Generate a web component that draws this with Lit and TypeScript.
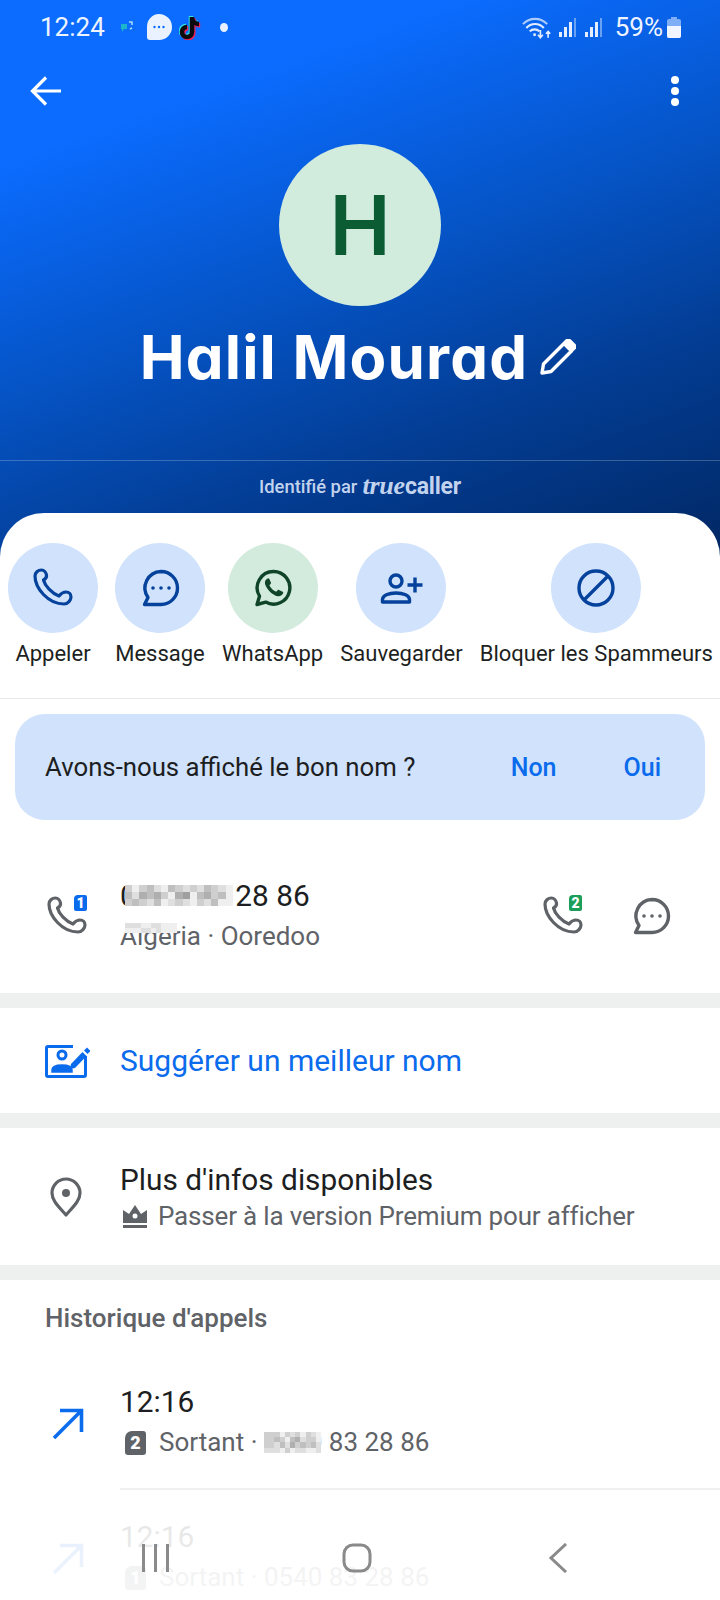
import { LitElement, css, html } from "lit";
import { customElement } from "lit/decorators.js";

const PHONE =
  "M8.5 2c2.500 0 4.500 2.500 5 5 .4 2.500-1 4-3 5 1.500 6 8 13 15.500 16 2-2.500 4-4 7-4 3 0 5 2 5 5 0 3-3 7-7 7C15 36 2 20 2 8c0-3.500 3-6 6.500-6z";

const phoneIcon = (color: string) => html`<svg
  width="40"
  height="40"
  viewBox="0 0 40 40"
  fill="none"
  stroke=${color}
  stroke-width="3.200"
  stroke-linejoin="round"
>
  <path d=${PHONE} />
</svg>`;

const bubbleIcon = (color: string) => html`<svg width="40" height="40" viewBox="0 0 40 40">
  <path
    d="M21 3.500a16.500 16.500 0 1 1 0 33H4.500l3.500-7A16.500 16.500 0 0 1 21 3.500z"
    fill="none"
    stroke=${color}
    stroke-width="3.400"
    stroke-linejoin="round"
  />
  <circle cx="13" cy="20" r="1.800" fill=${color} />
  <circle cx="21" cy="20" r="1.800" fill=${color} />
  <circle cx="29" cy="20" r="1.800" fill=${color} />
</svg>`;

const whatsappIcon = html`<svg width="40" height="40" viewBox="0 0 40 40">
  <path
    d="M20.500 3.500a16.300 16.300 0 1 1-7.800 30.600L4 36.500l2.500-8.300A16.300 16.300 0 0 1 20.500 3.500z"
    fill="none"
    stroke="#0f4429"
    stroke-width="3.400"
    stroke-linejoin="round"
  />
  <path
    d="M14.800 10.500c-1.700.6-3.300 2.600-2.800 5.200.9 4.700 7.400 11.600 12.800 12.500 2.500.4 4.700-1 5.400-3.100.2-.6 0-1.100-.5-1.400l-3.700-1.800c-.6-.3-1-.2-1.400.3l-1.300 1.600c-2.900-1-5.700-3.700-6.900-6.500l1.200-1.300c.4-.5.500-.9.300-1.400l-1.700-3.900c-.3-.6-1-.7-1.400-.4z"
    fill="#0f4429"
  />
</svg>`;

const addPersonIcon = html`<svg width="44" height="40" viewBox="0 0 44 40" fill="none" stroke="#04429c" stroke-width="3.400">
  <circle cx="17" cy="13" r="6" />
  <path d="M3.500 34v-2.500c0-4 6-6.500 13.500-6.500s13.500 2.500 13.500 6.500V34z" stroke-linejoin="round" />
  <path d="M36 9.500v15M28.500 17h15" />
</svg>`;

const blockIcon = html`<svg width="40" height="40" viewBox="0 0 40 40" fill="none" stroke="#04429c" stroke-width="3.400">
  <circle cx="20" cy="20" r="17" />
  <path d="M8 32L32 8" />
</svg>`;

const arrowIcon = html`<svg class="out" width="32" height="32" viewBox="0 0 32 32" fill="none" stroke="#0b6bed" stroke-width="3.600">
  <path d="M2 31L29 4M8 3.500h21.500V25" />
</svg>`;

const barsIcon = html`<svg width="19" height="19" viewBox="0 0 19 19" fill="#e3edff">
  <rect x="0" y="14" width="3" height="5" />
  <rect x="5" y="9" width="3" height="10" />
  <rect x="10" y="4" width="3" height="15" />
  <rect x="15" y="0" width="2" height="19" opacity=".45" />
</svg>`;

const TIKTOK = "M13 3v15a5 5 0 1 1-5-5M13 4c.5 3.500 3.500 6 7 6";

// pixelated patches that hide part of the number
const MOSAIC_A = ["cecbdebcdcdbcde", "bdabacea9ebacbe", "cbcdbedcdecdbee"];
const MOSAIC_B = ["cccecdcecde", "ccbcebadcce", "ccdbdacbcbd", "dddeceddeed"];
const MOSAIC_C = ["dddeeddeee", "eeeddedeee"];

const mosaic = (rows: string[], size: number, cls: string) => html`<span class="mosaic ${cls}">
  ${rows.map(
    (row) => html`<span class="mrow">
      ${row.split("").map((c) => {
        const v = parseInt(c, 16) * 16 + 15;
        return html`<i style="width:${size}px;height:${size}px;background:rgb(${v},${v},${v})"></i>`;
      })}
    </span>`
  )}
</span>`;

const actions = [
  { label: "Appeler", green: false, icon: phoneIcon("#04429c") },
  { label: "Message", green: false, icon: bubbleIcon("#04429c") },
  { label: "WhatsApp", green: true, icon: whatsappIcon },
  { label: "Sauvegarder", green: false, icon: addPersonIcon },
  { label: "Bloquer les Spammeurs", green: false, icon: blockIcon },
];

@customElement("app-root")
export class AppRoot extends LitElement {
  static styles = css`
    :host {
      display: block;
      position: relative;
      width: 720px;
      height: 1600px;
      overflow: hidden;
      background: #fff;
      font-family: Roboto, "Liberation Sans", sans-serif;
      color: #1c1e21;
    }

    .hero {
      height: 560px;
      margin-bottom: -47px;
      background: linear-gradient(160deg, #0b6cff 0%, #0b6cff 20%, #0552c2 50%, #033d94 72%, #012763 100%);
      color: #fff;
      display: flex;
      flex-direction: column;
    }

    .status {
      height: 54px;
      padding: 0 39px 0 40px;
      display: flex;
      align-items: center;
      font-size: 26px;
      color: #eef4ff;
    }

    .status .time {
      width: 80px;
    }

    .notif {
      display: flex;
      align-items: center;
    }

    .notif .bubble {
      margin: 0 7px 0 13px;
    }

    .notif .dot {
      width: 8px;
      height: 9px;
      margin-left: 17px;
      border-radius: 50%;
      background: #eaf2ff;
    }

    .status .right {
      margin-left: auto;
      display: flex;
      align-items: center;
      gap: 7px;
    }

    .pct {
      margin: 0 -3px 0 4px;
    }

    .toolbar {
      height: 74px;
      padding: 0 0 0 30px;
      display: flex;
      align-items: center;
      justify-content: space-between;
      margin-bottom: 16px;
    }

    .dots {
      display: flex;
      flex-direction: column;
      gap: 3px;
      margin-right: 41px;
    }

    .dots i {
      width: 8px;
      height: 8px;
      border-radius: 50%;
      background: #fff;
    }

    .avatar {
      align-self: center;
      width: 162px;
      height: 162px;
      flex: none;
      border-radius: 50%;
      background: #d1ebdd;
      color: #0b5b33;
      display: flex;
      align-items: center;
      justify-content: center;
      font-family: Inter, "Liberation Sans", sans-serif;
      font-weight: 600;
      font-size: 82px;
    }

    .name-row {
      display: flex;
      justify-content: center;
      align-items: center;
      gap: 12px;
      margin-top: 16px;
      padding-right: 4px;
      height: 70px;
      flex: none;
    }

    .name {
      font-family: Inter, "Liberation Sans", sans-serif;
      font-feature-settings: "cv11";
      font-weight: 700;
      font-size: 60px;
      letter-spacing: 1.2px;
      line-height: 70px;
      white-space: nowrap;
    }

    .hero hr {
      width: 100%;
      height: 1px;
      margin: 68px 0 0;
      border: 0;
      background: rgba(255, 255, 255, 0.22);
      flex: none;
    }

    .identified {
      margin-top: 12px;
      height: 26px;
      display: flex;
      justify-content: center;
      align-items: center;
      gap: 5px;
      font-size: 18.400px;
      font-weight: 500;
      color: #c2d3ee;
    }

    .brand {
      font-weight: 700;
      font-size: 23px;
      letter-spacing: -0.2px;
    }

    .brand em {
      font-family: "Liberation Serif", serif;
      font-style: italic;
      font-weight: 700;
      font-size: 26px;
    }

    .sheet {
      position: relative;
      background: #fff;
      border-radius: 44px 44px 0 0;
    }

    .actions {
      display: flex;
      gap: 17px;
      padding: 30px 0 0 8px;
      height: 155px;
      border-bottom: 1px solid #e6e8ea;
    }

    .action {
      display: flex;
      flex-direction: column;
      align-items: center;
      white-space: nowrap;
      font-size: 22px;
      line-height: 30px;
      color: #1d1f22;
    }

    .circle {
      width: 90px;
      height: 90px;
      margin-bottom: 6px;
      border-radius: 50%;
      background: #d0e2fc;
      display: flex;
      align-items: center;
      justify-content: center;
    }

    .circle.green {
      background: #d3ebdd;
    }

    .ask {
      margin: 15px 15px 0;
      height: 106px;
      padding: 0 44px 0 30px;
      border-radius: 30px;
      background: #d0e2fc;
      display: flex;
      align-items: center;
      font-size: 25.750px;
    }

    .ask span:first-child {
      flex: 1;
    }

    .ask b {
      font-weight: 500;
      font-size: 25px;
      color: #0b6bed;
    }

    .ask b + b {
      margin-left: 67px;
    }

    .row {
      display: flex;
      align-items: center;
      padding-left: 45px;
    }

    .phone-row {
      height: 173px;
      box-sizing: border-box;
      padding-top: 18px;
      padding-right: 49px;
    }

    .ic {
      width: 75px;
      flex: none;
      position: relative;
      display: flex;
    }

    .phone-row > .ic svg {
      margin-left: 2px;
    }

    .sim {
      position: absolute;
      left: 29px;
      top: -1px;
      width: 13px;
      height: 16px;
      border-radius: 4px 2px 2px 2px;
      color: #fff;
      font-size: 14px;
      line-height: 16px;
      font-weight: 900;
      text-align: center;
    }

    .main {
      font-size: 29.800px;
      line-height: 40px;
      position: relative;
    }

    .sub {
      font-size: 26px;
      line-height: 40px;
      color: #5f6368;
      position: relative;
      display: flex;
      align-items: center;
    }

    .grow {
      flex: 1;
    }

    .tail {
      display: flex;
      align-items: center;
      gap: 48px;
    }

    .tail .ic {
      width: 40px;
    }

    .tail .sim {
      left: 26px;
    }

    .band {
      height: 15px;
      background: #eef0f0;
    }

    .suggest {
      height: 105px;
      color: #0b6bed;
      font-size: 30px;
    }

    .info {
      height: 137px;
      box-sizing: border-box;
      padding-top: 3px;
    }

    .info .ic {
      margin-top: -3px;
    }

    .info .main,
    .info .sub {
      line-height: 36px;
    }

    .info .sub {
      letter-spacing: -0.18px;
    }

    .crown {
      margin: 0 11px 0 3px;
    }

    .history-title {
      padding: 24px 0 23px 45px;
      font-size: 26px;
      line-height: 28px;
      font-weight: 500;
      color: #5f6368;
    }

    .call {
      height: 135px;
    }

    .call .body {
      flex: 1;
      height: 100%;
      padding-top: 2px;
      display: flex;
      flex-direction: column;
      justify-content: center;
      border-bottom: 2px solid #eff0f1;
      box-sizing: border-box;
    }

    .call .sub {
      line-height: 41px;
    }

    .out {
      margin-left: 7px;
    }

    .sim-chip {
      width: 21px;
      height: 24px;
      margin: 0 13px 0 5px;
      border-radius: 7px 3px 3px 3px;
      background: #5f6368;
      color: #fff;
      font-size: 18px;
      font-weight: 900;
      line-height: 24px;
      text-align: center;
      flex: none;
    }

    .mosaic {
      position: absolute;
      display: flex;
      flex-direction: column;
    }

    .mrow {
      display: flex;
    }

    .mrow i {
      display: block;
    }

    .m-a {
      left: 5px;
      top: 9px;
    }

    .m-b {
      left: 144px;
      top: 10px;
    }

    .m-c {
      left: 5px;
      top: 7px;
    }

    .nav {
      position: absolute;
      left: 0;
      right: 0;
      bottom: 0;
      height: 96px;
      background: linear-gradient(rgba(255, 255, 255, 0.88), rgba(255, 255, 255, 0.94));
    }

    .nav svg {
      position: absolute;
      top: 39px;
    }

    .nav .recents {
      left: 140px;
    }

    .nav .home {
      left: 342px;
    }

    .nav .back {
      left: 548px;
    }
  `;

  render() {
    return html`
      <div class="hero">
        <div class="status">
          <span class="time">12:24</span>
          <span class="notif">
            <svg width="13" height="12" viewBox="0 0 13 12">
              <path d="M1 3h6v5H4l-2 3V8H1z" fill="#1cb5c9" />
              <path d="M9 1h3v3M10 8l2-1" fill="none" stroke="#a9dcf5" stroke-width="1.500" />
            </svg>
            <svg class="bubble" width="26" height="26" viewBox="0 0 26 26">
              <path d="M13 0a13 13 0 0 1 0 26H4C2 26 1 25 1 23v-10A12.500 12.500 0 0 1 13 0z" fill="#eaf2ff" />
              <circle cx="8.500" cy="13" r="1.200" fill="#0b6cff" />
              <circle cx="13" cy="13" r="1.200" fill="#0b6cff" />
              <circle cx="17.500" cy="13" r="1.200" fill="#0b6cff" />
            </svg>
            <svg width="24" height="26" viewBox="0 0 24 26" fill="none" stroke-width="4.600">
              <path d=${TIKTOK} stroke="#35e0e8" transform="translate(-1 -1)" />
              <path d=${TIKTOK} stroke="#f0215a" transform="translate(1.200 1.200)" />
              <path d=${TIKTOK} stroke="#0c0c10" />
            </svg>
            <span class="dot"></span>
          </span>
          <span class="right">
            <svg width="30" height="23" viewBox="0 0 31 23" fill="none" stroke="#e3edff" stroke-width="2.200">
              <path d="M1 8a17 17 0 0 1 25 0" opacity=".75" />
              <path d="M4.500 12a12 12 0 0 1 18 0M8 15.500a7 7 0 0 1 10 0" />
              <circle cx="13" cy="19" r="1.500" fill="#e3edff" stroke="none" />
              <path d="M19 14v8M16.500 19l2.500 3 2.500-3M27 22v-6M24.800 18l2.200-2.500 2.200 2.500" stroke-width="1.700" />
            </svg>
            ${barsIcon}${barsIcon}
            <span class="pct">59%</span>
            <svg width="14" height="21" viewBox="0 0 14 21">
              <path d="M4 0h6v2h2a2 2 0 0 1 2 2v15a2 2 0 0 1-2 2H2a2 2 0 0 1-2-2V4a2 2 0 0 1 2-2h2z" fill="#7fadf6" />
              <path d="M0 9h14v10a2 2 0 0 1-2 2H2a2 2 0 0 1-2-2z" fill="#f0f5ff" />
            </svg>
          </span>
        </div>
        <div class="toolbar">
          <svg width="32" height="32" viewBox="0 0 32 32" fill="none" stroke="#fff" stroke-width="3.200">
            <path d="M31 16H3M16 2.500L2.500 16 16 29.500" />
          </svg>
          <span class="dots"><i></i><i></i><i></i></span>
        </div>
        <div class="avatar">H</div>
        <div class="name-row">
          <span class="name">Halil Mourad</span>
          <svg width="36" height="36" viewBox="0 0 36 36" fill="none" stroke="#fff" stroke-width="3.400" stroke-linejoin="round">
            <path d="M2 34l1.500-9L24 4.500l7.500 7.500L11 32.500z" />
            <path d="M25 3.500l2-2c.7-.7 1.700-.7 2.400 0l5 5c.7.700.7 1.700 0 2.400l-2 2z" fill="#fff" />
          </svg>
        </div>
        <hr />
        <div class="identified">
          <span>Identifié par</span>
          <span class="brand"><em>true</em>caller</span>
        </div>
      </div>

      <div class="sheet">
        <div class="actions">
          ${actions.map(
            (a) => html`<div class="action">
              <span class="circle ${a.green ? "green" : ""}">${a.icon}</span>
              ${a.label}
            </div>`
          )}
        </div>

        <div class="ask">
          <span>Avons-nous affiché le bon nom ?</span>
          <b>Non</b>
          <b>Oui</b>
        </div>

        <div class="row phone-row">
          <div class="ic">${phoneIcon("#5f6368")}<span class="sim" style="background:#0b6bed">1</span></div>
          <div class="grow">
            <div class="main">0540 83 28 86${mosaic(MOSAIC_A, 7.200, "m-a")}</div>
            <div class="sub">Algeria · Ooredoo${mosaic(MOSAIC_C, 5.200, "m-c")}</div>
          </div>
          <div class="tail">
            <div class="ic">${phoneIcon("#5f6368")}<span class="sim" style="background:#1a9e59">2</span></div>
            ${bubbleIcon("#5f6368")}
          </div>
        </div>

        <div class="band"></div>

        <div class="row suggest">
          <div class="ic">
            <svg width="45" height="36" viewBox="0 0 45 36" fill="none" stroke="#0b6bed">
              <path d="M28 3.500H3A1.500 1.500 0 0 0 1.500 5v27A1.500 1.500 0 0 0 3 33.500h36a1.500 1.500 0 0 0 1.500-1.500V13" stroke-width="3" />
              <circle cx="17" cy="12" r="4" stroke-width="3" />
              <path d="M7 29v-2c0-3 4-5 10-5s10 2 10 5v2z" fill="#0b6bed" stroke-width="1.500" />
              <path d="M26 21l-1 5 5-1L41.500 13l-4-4z" fill="#0b6bed" stroke="none" />
              <path d="M39 7.500l3-3 3.500 3.500-3 3z" fill="#0b6bed" stroke="none" />
            </svg>
          </div>
          <span>Suggérer un meilleur nom</span>
        </div>

        <div class="band"></div>

        <div class="row info">
          <div class="ic">
            <svg width="42" height="42" viewBox="0 0 42 42" fill="none" stroke="#5f6368" stroke-width="3.200">
              <path d="M21 39C14 31 7 25 7 17a14 14 0 0 1 28 0c0 8-7 14-14 22z" stroke-linejoin="round" />
              <circle cx="21" cy="17" r="4" fill="#5f6368" stroke="none" />
            </svg>
          </div>
          <div class="grow">
            <div class="main">Plus d'infos disponibles</div>
            <div class="sub">
              <svg class="crown" width="24" height="24" viewBox="0 0 24 24" fill="#5f6368">
                <path d="M0 6l6 4 6-9 6 9 6-4v13H0z" />
                <path d="M0 21h24v3H0z" />
                <circle cx="12" cy="12" r="2.500" fill="#fff" />
              </svg>
              Passer à la version Premium pour afficher
            </div>
          </div>
        </div>

        <div class="band"></div>

        <div class="history-title">Historique d'appels</div>

        <div class="row call">
          <div class="ic">${arrowIcon}</div>
          <div class="body">
            <div class="main">12:16</div>
            <div class="sub">
              <span class="sim-chip">2</span>
              Sortant · 0540 83 28 86${mosaic(MOSAIC_B, 5.200, "m-b")}
            </div>
          </div>
        </div>

        <div class="row call">
          <div class="ic">${arrowIcon}</div>
          <div class="body">
            <div class="main">12:16</div>
            <div class="sub">
              <span class="sim-chip">1</span>
              Sortant · 0540 83 28 86
            </div>
          </div>
        </div>
      </div>

      <div class="nav">
        <svg class="recents" width="32" height="30" viewBox="0 0 32 30" fill="#8a8a8a">
          <rect x="2" y="1" width="3" height="28" />
          <rect x="14" y="1" width="3" height="28" />
          <rect x="26" y="1" width="3" height="28" />
        </svg>
        <svg class="home" width="30" height="30" viewBox="0 0 30 30" fill="none" stroke="#8a8a8a" stroke-width="3">
          <rect x="2" y="2" width="26" height="26" rx="9" />
        </svg>
        <svg class="back" width="20" height="30" viewBox="0 0 20 30" fill="none" stroke="#8a8a8a" stroke-width="3">
          <path d="M18 1L3 15l15 14" />
        </svg>
      </div>
    `;
  }
}
